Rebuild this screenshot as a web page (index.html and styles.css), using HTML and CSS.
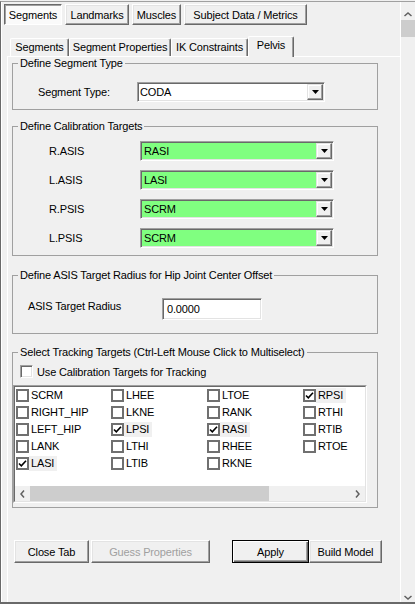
FILE: index.html
```html
<!DOCTYPE html>
<html lang="en">
  <head>
    <meta charset="UTF-8" />
    <title>Segments - Pelvis</title>
    <link rel="stylesheet" href="styles.css">
  </head>

  <body>
    <div class="window">
      <div class="main">
        <div class="top-tabs">
          <button class="btn btn-pressed w-segments">Segments</button>
          <button class="btn w-landmarks">Landmarks</button>
          <button class="btn w-muscles">Muscles</button>
          <button class="btn w-subject">Subject Data / Metrics</button>
        </div>

        <div class="tab-strip">
          <div class="tab w-t1">Segments</div>
          <div class="tab w-t2">Segment Properties</div>
          <div class="tab w-t3">IK Constraints</div>
          <div class="tab tab-active w-t4">Pelvis</div>
        </div>

        <div class="panel">
          <fieldset class="group">
            <legend>Define Segment Type</legend>
            <div class="type-row">
              <span class="type-label">Segment Type:</span>
              <div class="combo combo-type">
                <span class="combo-text">CODA</span>
                <span class="combo-btn"><svg width="7" height="4" viewBox="0 0 7 4"><polygon points="0,0 7,0 3.5,4" fill="#000"/></svg></span>
              </div>
            </div>
          </fieldset>

          <fieldset class="group g-cal">
            <legend>Define Calibration Targets</legend>
            <div class="cal-list">
              <div class="cal-row">
                <span class="cal-label">R.ASIS</span>
                <div class="combo combo-green">
                  <span class="combo-text">RASI</span>
                  <span class="combo-btn"><svg width="7" height="4" viewBox="0 0 7 4"><polygon points="0,0 7,0 3.5,4" fill="#000"/></svg></span>
                </div>
              </div>
              <div class="cal-row">
                <span class="cal-label">L.ASIS</span>
                <div class="combo combo-green">
                  <span class="combo-text">LASI</span>
                  <span class="combo-btn"><svg width="7" height="4" viewBox="0 0 7 4"><polygon points="0,0 7,0 3.5,4" fill="#000"/></svg></span>
                </div>
              </div>
              <div class="cal-row">
                <span class="cal-label">R.PSIS</span>
                <div class="combo combo-green">
                  <span class="combo-text">SCRM</span>
                  <span class="combo-btn"><svg width="7" height="4" viewBox="0 0 7 4"><polygon points="0,0 7,0 3.5,4" fill="#000"/></svg></span>
                </div>
              </div>
              <div class="cal-row">
                <span class="cal-label">L.PSIS</span>
                <div class="combo combo-green">
                  <span class="combo-text">SCRM</span>
                  <span class="combo-btn"><svg width="7" height="4" viewBox="0 0 7 4"><polygon points="0,0 7,0 3.5,4" fill="#000"/></svg></span>
                </div>
              </div>
            </div>
          </fieldset>

          <fieldset class="group g-radius">
            <legend>Define ASIS Target Radius for Hip Joint Center Offset</legend>
            <div class="radius-row">
              <span class="radius-label">ASIS Target Radius</span>
              <div class="textbox">0.0000</div>
            </div>
          </fieldset>

          <fieldset class="group g-track">
            <legend>Select Tracking Targets (Ctrl-Left Mouse Click to Multiselect)</legend>
            <div class="use-row">
              <span class="check check-sunken"></span>
              <span class="use-label">Use Calibration Targets for Tracking</span>
            </div>
            <div class="listbox">
              <div class="listbox-inner">
                <div class="target-grid">
                  <div class="item"><span class="check"></span><span class="item-label">SCRM</span></div>
                  <div class="item"><span class="check"></span><span class="item-label">RIGHT_HIP</span></div>
                  <div class="item"><span class="check"></span><span class="item-label">LEFT_HIP</span></div>
                  <div class="item"><span class="check"></span><span class="item-label">LANK</span></div>
                  <div class="item item-on"><span class="check"><svg width="9" height="9" viewBox="0 0 9 9"><path d="M1 4.5 L3.3 6.8 L8 1.8" fill="none" stroke="#000" stroke-width="1.6"/></svg></span><span class="item-label">LASI</span></div>
                  <div class="item"><span class="check"></span><span class="item-label">LHEE</span></div>
                  <div class="item"><span class="check"></span><span class="item-label">LKNE</span></div>
                  <div class="item item-on"><span class="check"><svg width="9" height="9" viewBox="0 0 9 9"><path d="M1 4.5 L3.3 6.8 L8 1.8" fill="none" stroke="#000" stroke-width="1.6"/></svg></span><span class="item-label">LPSI</span></div>
                  <div class="item"><span class="check"></span><span class="item-label">LTHI</span></div>
                  <div class="item"><span class="check"></span><span class="item-label">LTIB</span></div>
                  <div class="item"><span class="check"></span><span class="item-label">LTOE</span></div>
                  <div class="item"><span class="check"></span><span class="item-label">RANK</span></div>
                  <div class="item item-on"><span class="check"><svg width="9" height="9" viewBox="0 0 9 9"><path d="M1 4.5 L3.3 6.8 L8 1.8" fill="none" stroke="#000" stroke-width="1.6"/></svg></span><span class="item-label">RASI</span></div>
                  <div class="item"><span class="check"></span><span class="item-label">RHEE</span></div>
                  <div class="item"><span class="check"></span><span class="item-label">RKNE</span></div>
                  <div class="item item-on"><span class="check"><svg width="9" height="9" viewBox="0 0 9 9"><path d="M1 4.5 L3.3 6.8 L8 1.8" fill="none" stroke="#000" stroke-width="1.6"/></svg></span><span class="item-label">RPSI</span></div>
                  <div class="item"><span class="check"></span><span class="item-label">RTHI</span></div>
                  <div class="item"><span class="check"></span><span class="item-label">RTIB</span></div>
                  <div class="item"><span class="check"></span><span class="item-label">RTOE</span></div>
                </div>
                <div class="hscroll">
                  <span class="hs-arrow"><svg width="5" height="8" viewBox="0 0 5 8"><path d="M4 0.5 L1 4 L4 7.5" fill="none" stroke="#606060" stroke-width="1.5"/></svg></span>
                  <span class="hs-thumb"></span>
                  <span class="hs-track"></span>
                  <span class="hs-arrow"><svg width="5" height="8" viewBox="0 0 5 8"><path d="M1 0.5 L4 4 L1 7.5" fill="none" stroke="#606060" stroke-width="1.5"/></svg></span>
                </div>
              </div>
            </div>
          </fieldset>

          <div class="actions">
            <button class="btn w-close">Close Tab</button>
            <button class="btn btn-disabled w-guess">Guess Properties</button>
            <button class="btn btn-default w-apply">Apply</button>
            <button class="btn w-build">Build Model</button>
          </div>
        </div>
      </div>

      <div class="vscroll">
        <span class="vs-arrow vs-up"><svg width="8" height="5" viewBox="0 0 8 5"><path d="M0.5 4 L4 1 L7.5 4" fill="none" stroke="#606060" stroke-width="1.5"/></svg></span>
        <span class="vs-thumb"></span>
        <span class="vs-track"></span>
        <span class="vs-arrow vs-down"><svg width="8" height="5" viewBox="0 0 8 5"><path d="M0.5 1 L4 4 L7.5 1" fill="none" stroke="#606060" stroke-width="1.5"/></svg></span>
      </div>
    </div>
  </body>
</html>
```

FILE: styles.css
```css
body {
  margin: 0;
  background-color: #f0f0f0;
  font-family: 'Liberation Sans', Arial, sans-serif;
  font-size: 11px;
  letter-spacing: -0.15px;
  color: #000;
}
* {
  box-sizing: border-box;
}
svg {
  display: block;
}

/* window frame */
.window {
  margin-top: 1px;
  width: 415px;
  height: 603px;
  display: flex;
  overflow: hidden;
  border-top: 1px solid #a0a0a0;
  border-left: 1px solid #696969;
  border-bottom: 2px solid #696969;
}
.main {
  flex: 1;
  min-width: 0;
  display: flex;
  flex-direction: column;
  border-left: 1px solid #fff;
  padding: 2px 0 0 2px;
}

/* buttons */
.btn {
  height: 23px;
  padding: 0;
  font: inherit;
  letter-spacing: inherit;
  color: #000;
  background-color: #f0f0f0;
  border: 1px solid;
  border-color: #fff #696969 #696969 #fff;
  box-shadow: inset -1px -1px 0 #a0a0a0, inset 1px 1px 0 #e3e3e3;
  outline: none;
}
.btn-pressed {
  background-color: #fafafa;
  border-color: #696969 #fff #fff #696969;
  box-shadow: inset 1px 1px 0 #a0a0a0;
}
.btn-default {
  border-color: #000;
  box-shadow: inset 1px 1px 0 #fff, inset -1px -1px 0 #696969, inset -2px -2px 0 #a0a0a0;
}
.btn-disabled {
  color: #a0a0a0;
}

.top-tabs {
  display: flex;
  gap: 3px;
}
.top-tabs .btn {
  height: 21px;
}
.w-segments { width: 58px; }
.w-landmarks { width: 64px; }
.w-muscles { width: 49px; }
.w-subject { width: 123px; }

/* inner tab control */
.tab-strip {
  display: flex;
  align-items: flex-end;
  height: 20px;
  margin-top: 11px;
  padding-left: 6px;
}
.tab {
  height: 18px;
  line-height: 16px;
  text-align: center;
  white-space: nowrap;
  border-top: 1px solid #fff;
  border-left: 1px solid #fff;
  border-right: 1px solid #696969;
  box-shadow: inset -1px 0 0 #a0a0a0;
  border-radius: 2px 2px 0 0;
}
.tab-active {
  position: relative;
  z-index: 1;
  height: 21px;
  margin-bottom: -1px;
  line-height: 17px;
  background-color: #f0f0f0;
}
.w-t1 { width: 59px; }
.w-t2 { width: 102px; }
.w-t3 { width: 77px; }
.w-t4 { width: 46px; }

.panel {
  flex: 1;
  margin-left: 3px;
  overflow: hidden;
  border-top: 1px solid #fff;
  border-left: 1px solid #fff;
}

/* group boxes */
.group {
  width: 366px;
  min-width: 0;
  margin: 0 0 0 4px;
  padding: 0;
  border: 1px solid #a0a0a0;
}
.group legend {
  margin-left: 5px;
  padding: 0 2px;
  line-height: 13px;
}
.g-cal {
  margin-top: 10px;
}
.g-radius {
  margin-top: 13px;
}
.g-track {
  margin-top: 12px;
}

/* combo boxes and text boxes */
.combo,
.textbox {
  background-color: #fff;
  border: 1px solid;
  border-color: #a0a0a0 #fff #fff #a0a0a0;
  box-shadow: inset 1px 1px 0 #696969, inset -1px -1px 0 #e3e3e3;
}
.combo {
  display: flex;
  height: 20px;
  padding: 1px;
}
.combo-text {
  flex: 1;
  padding-left: 1px;
  line-height: 16px;
}
.combo-btn {
  width: 16px;
  height: 16px;
  display: flex;
  align-items: center;
  justify-content: center;
  background-color: #f0f0f0;
  border: 1px solid;
  border-color: #e3e3e3 #696969 #696969 #e3e3e3;
  box-shadow: inset -1px -1px 0 #a0a0a0, inset 1px 1px 0 #fff;
}
.combo-green {
  width: 194px;
  background-color: #80ff80;
}
.combo-green .combo-text {
  padding-left: 2px;
}

.type-row {
  display: flex;
  align-items: center;
  padding: 12px 0 7px 25px;
}
.type-label {
  width: 99px;
}
.combo-type {
  width: 188px;
}

.cal-list {
  display: flex;
  flex-direction: column;
  gap: 9px;
  padding: 8px 0 7px 36px;
}
.cal-row {
  display: flex;
  align-items: center;
}
.cal-label {
  width: 91px;
}

.radius-row {
  display: flex;
  align-items: flex-start;
  padding: 16px 0 13px 15px;
}
.radius-label {
  width: 134px;
  margin-top: 2px;
  line-height: 13px;
}
.textbox {
  width: 100px;
  height: 22px;
  padding-left: 4px;
  line-height: 20px;
}

/* tracking targets */
.use-row {
  display: flex;
  align-items: center;
  height: 13px;
  margin-top: 6px;
  padding-left: 7px;
}
.use-label {
  margin-left: 4px;
}
.check {
  flex: none;
  width: 13px;
  height: 13px;
  padding: 0;
  display: flex;
  align-items: center;
  justify-content: center;
  background-color: #fff;
  border: 2px solid #707070;
}
.check-sunken {
  border-width: 1px;
  border-color: #a0a0a0 #fff #fff #a0a0a0;
  box-shadow: inset 1px 1px 0 #696969, inset -1px -1px 0 #e3e3e3;
}

.listbox {
  width: 354px;
  height: 118px;
  margin: 7px 0 4px 0;
  border: 1px solid;
  border-color: #a0a0a0 #fff #fff #a0a0a0;
}
.listbox-inner {
  height: 100%;
  display: flex;
  flex-direction: column;
  background-color: #fff;
  border: 1px solid;
  border-color: #696969 #e3e3e3 #e3e3e3 #696969;
}
.target-grid {
  flex: 1;
  display: grid;
  grid-template-rows: repeat(5, 17px);
  grid-template-columns: 95px 96px 96px 1fr;
  grid-auto-flow: column;
  padding-left: 1px;
}
.item {
  display: flex;
  align-items: center;
}
.item-label {
  padding: 0 3px 0 2px;
  line-height: 15px;
}
.item-on .item-label {
  background-color: #f0f0f0;
}

.hscroll {
  display: flex;
  height: 15px;
  background-color: #f0f0f0;
}
.hs-arrow {
  width: 15px;
  display: flex;
  align-items: center;
  justify-content: center;
}
.hs-thumb {
  width: 239px;
  background-color: #cdcdcd;
}
.hs-track {
  flex: 1;
}

/* bottom buttons */
.actions {
  display: flex;
  margin-top: 32px;
  padding-left: 6px;
}
.w-close { width: 75px; }
.w-guess { width: 119px; margin-left: 2px; }
.w-apply { width: 77px; margin-left: 22px; }
.w-build { width: 73px; }

/* window scroll bar */
.vscroll {
  width: 15px;
  display: flex;
  flex-direction: column;
  border-left: 1px solid #fff;
}
.vs-arrow {
  height: 18px;
  display: flex;
  justify-content: center;
}
.vs-up {
  align-items: flex-end;
  padding-bottom: 3px;
}
.vs-down {
  align-items: flex-end;
  padding-bottom: 2px;
}
.vs-thumb {
  height: 17px;
  background-color: #cdcdcd;
}
.vs-track {
  flex: 1;
}
```
